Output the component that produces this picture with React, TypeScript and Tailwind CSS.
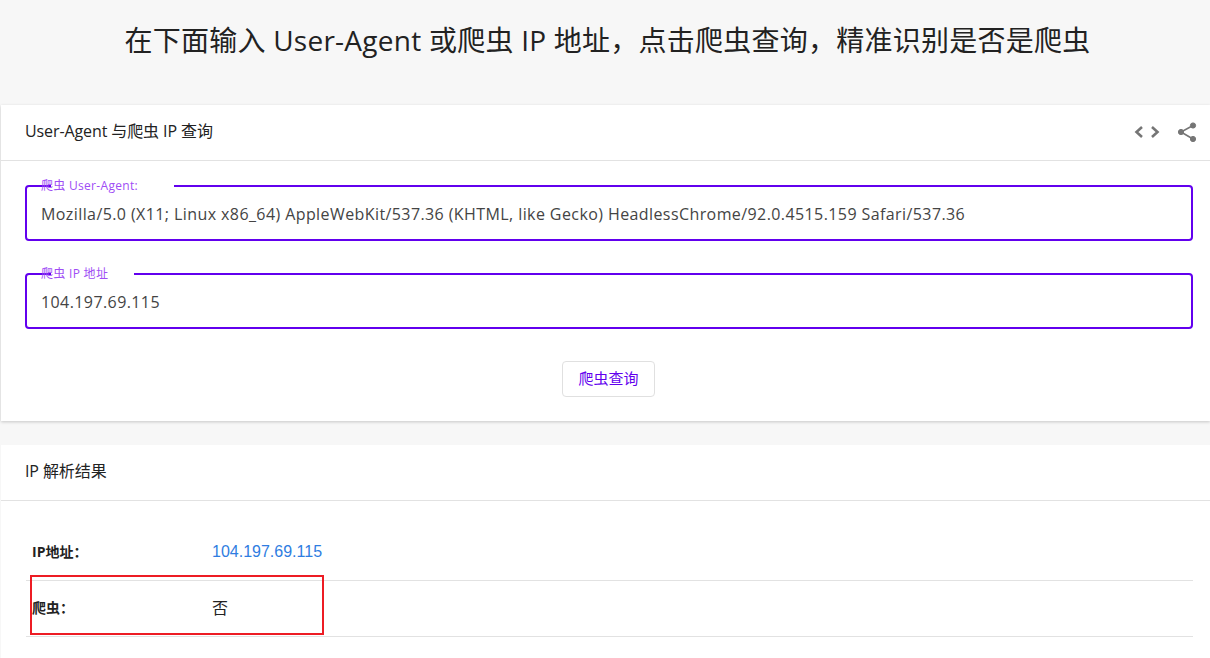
import React from 'react';

const FONT = "font-['Open_Sans','Noto_Sans_CJK_SC',sans-serif]";

// Outlined text field with a notch in the border for the label
function Field({ label, value, legendWidth }: { label: string; value: string; legendWidth: string }) {
  return (
    <fieldset className="relative h-[56px] rounded-[4px] border-2 border-[#6200ee] px-[14px]">
      <legend className={`${legendWidth} ml-[10px] h-[2px] p-0`} />
      <label className="absolute left-[14px] top-[-10px] text-[12px] leading-[18px] tracking-[0.3px] text-[#a04df5]">{label}</label>
      <div className="pt-[15px] text-[16px] leading-[24px] tracking-[0.41px] text-[#444444]">{value}</div>
    </fieldset>
  );
}

function CardHeader({ title, children }: { title: string; children?: React.ReactNode }) {
  return (
    <div className="flex h-[56px] items-center justify-between border-b border-[#e2e2e2] pb-[2px] pl-[24px] pr-[13px]">
      <h2 className="mb-[2px] text-[16px] font-normal tracking-[-0.1px] text-[#222222]">{title}</h2>
      {children}
    </div>
  );
}

export default function App() {
  return (
    <div className={`${FONT} relative h-[658px] overflow-hidden bg-[#f7f7f7]`}>
      <h1 className="h-[105px] pl-[5px] pt-[19px] text-center text-[28px] leading-[42px] font-normal tracking-[0.25px] text-[#222222]">
        在下面输入 User-Agent 或爬虫 IP 地址，点击爬虫查询，精准识别是否是爬虫
      </h1>

      <section className="ml-[1px] h-[316px] bg-white shadow-[0_1px_3px_rgba(0,0,0,0.2)]">
        <CardHeader title="User-Agent 与爬虫 IP 查询">
          <div className="flex items-center gap-[17px] text-[#757575]">
            <svg width="26" height="14" viewBox="0 0 26 14" fill="none" stroke="currentColor" strokeWidth="2.6">
              <path d="M8 2 L2.5 7 L8 12" />
              <path d="M18 2 L23.5 7 L18 12" />
            </svg>
            <svg width="20" height="20" viewBox="0 0 20 20" fill="currentColor" stroke="currentColor">
              <circle cx="16" cy="3.5" r="2.6" />
              <circle cx="4" cy="10" r="2.6" />
              <circle cx="16" cy="17" r="2.6" />
              <path d="M16 3.5 L4 10 L16 17" fill="none" strokeWidth="1.6" />
            </svg>
          </div>
        </CardHeader>
        <div className="pl-[24px] pr-[17px] pt-[24px]">
          <Field
            label="爬虫 User-Agent:"
            legendWidth="w-[123px]"
            value="Mozilla/5.0 (X11; Linux x86_64) AppleWebKit/537.36 (KHTML, like Gecko) HeadlessChrome/92.0.4515.159 Safari/537.36"
          />
          <div className="mt-[32px]">
            <Field label="爬虫 IP 地址" legendWidth="w-[83px]" value="104.197.69.115" />
          </div>
          <div className="mt-[32px] mr-[1px] flex justify-center">
            <button className="h-[36px] w-[93px] rounded-[4px] border border-[#e0e0e0] bg-white pb-[2px] text-[15px] text-[#6200ee]">
              爬虫查询
            </button>
          </div>
        </div>
      </section>

      <section className="relative ml-[1px] mt-[24px] h-[220px] bg-white">
        <CardHeader title="IP 解析结果" />
        <div className="ml-[25px] mr-[17px] pt-[24px] text-[16px]">
          <div className="flex h-[56px] items-center border-b border-[#e2e2e2] pb-[2px]">
            <div className="w-[186px] pl-[6px] text-[14px] font-bold text-[#222222]">IP地址：</div>
            <div className="font-['Liberation_Sans','Noto_Sans_CJK_SC',sans-serif] text-[#2f7de1]">104.197.69.115</div>
          </div>
          <div className="flex h-[56px] items-center border-b border-[#e2e2e2] pb-[2px]">
            <div className="w-[186px] pl-[6px] text-[14px] font-bold text-[#222222]">爬虫：</div>
            <div className="text-[#222222]">否</div>
          </div>
        </div>
        {/* Red annotation box */}
        <div className="absolute left-[29px] top-[130px] h-[60px] w-[294px] border-2 border-[#ed1c24]" />
      </section>
    </div>
  );
}
